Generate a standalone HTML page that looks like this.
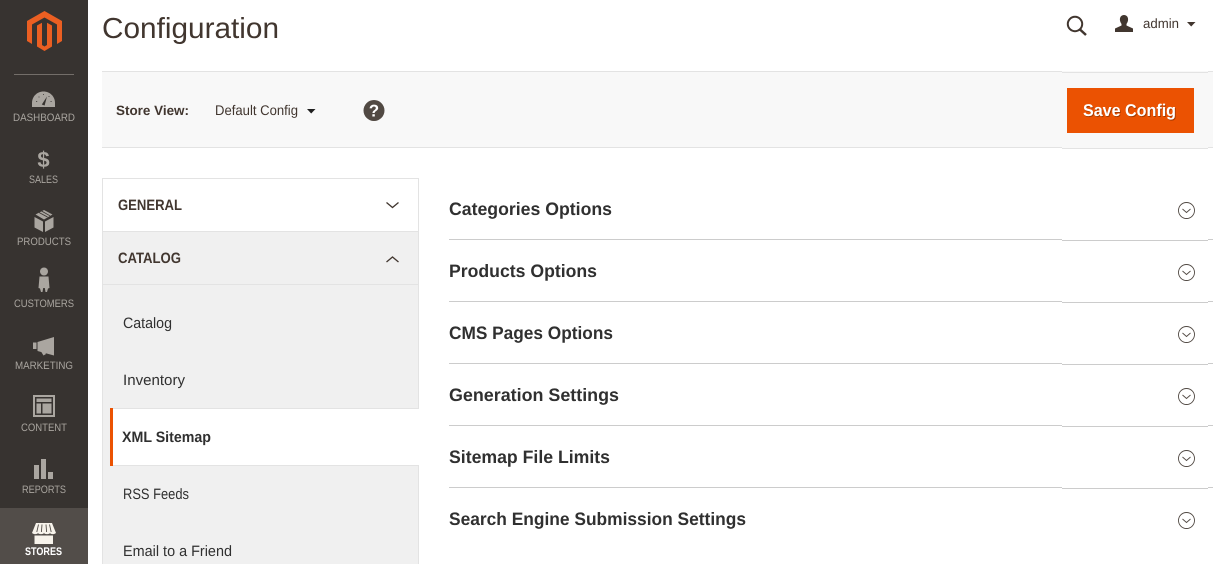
<!DOCTYPE html>
<html lang="en">
<head>
<meta charset="utf-8">
<title>Configuration</title>
<style>
html,body{margin:0;padding:0;width:1213px;height:564px;overflow:hidden;background:#fff}
svg{display:block}
text{font-family:"Liberation Sans",sans-serif;text-rendering:geometricPrecision}
.nav{font-size:10.8px;fill:#aaa6a0}
.sec{font-size:18px;font-weight:700;fill:#303030}
.tab{font-size:15px;fill:#303030}
.grp{font-size:15px;font-weight:700;fill:#41362f}
.ic{fill:#aaa6a0}
</style>
</head>
<body>
<svg width="1213" height="564" viewBox="0 0 1213 564" xmlns="http://www.w3.org/2000/svg">
<!-- sidebar -->
<rect x="0" y="0" width="88" height="564" fill="#373330"/>
<rect x="0" y="508" width="88" height="56" fill="#524d49"/>
<path fill="#eb5f22" d="M44.5 11 62 21V41L57 44V24.500L44.500 17.500 32 24.500V44L27 41V21Z"/>
<path fill="#eb5f22" d="M37 25.500 42 22.800V45L44.500 46.500 47 45V22.800L52 25.500V46.500L44.500 51 37 46.500Z"/>
<rect x="14" y="74" width="60" height="1" fill="#736e69"/>

<!-- dashboard -->
<path class="ic" d="M32 107V103C32 96.500 37 91.500 43.500 91.500S55 96.500 55 103V107Z"/>
<path d="M41.800 104.500 47 96.500 44.600 105.500Z" fill="#373330"/>
<path d="M36 101.500h1.200M38.500 97h1M43 94.500h1M48.500 96.500h1M50.500 101.500h1.200" stroke="#373330" stroke-width="0.800"/>
<text class="nav" x="13" y="121" textLength="62" lengthAdjust="spacingAndGlyphs">DASHBOARD</text>

<!-- sales -->
<text x="43.500" y="167" text-anchor="middle" style="font-size:22px;font-weight:700;fill:#aaa6a0">$</text>
<text class="nav" x="29" y="183" textLength="29" lengthAdjust="spacingAndGlyphs">SALES</text>

<!-- products -->
<path class="ic" d="M34.500 217 43 221.500V232L34.500 227.500ZM45 221.500 53.500 217V227.500L45 232ZM35.500 214.500 44 210 52.500 214.500 44 219.500Z"/>
<path d="M39 212.500 47.500 217M41.500 211 50 215.800" stroke="#373330" stroke-width="0.800" fill="none"/>
<text class="nav" x="17" y="245" textLength="54" lengthAdjust="spacingAndGlyphs">PRODUCTS</text>

<!-- customers -->
<circle class="ic" cx="44" cy="271.500" r="4"/>
<path class="ic" d="M39.500 276.500H48.500L49.500 288 48 288.500 47 292 45.500 292 44.800 288H43.200L42.500 292 41 292 40 288.500 38.500 288Z"/>
<text class="nav" x="14" y="307" textLength="60" lengthAdjust="spacingAndGlyphs">CUSTOMERS</text>

<!-- marketing -->
<path class="ic" d="M33 342.500H36.500V349H33ZM37.500 342 54 337V355.500L37.500 351H44L46 354 43.500 355.500 41 351.500H39.500L37.500 351Z"/>
<text class="nav" x="15" y="369" textLength="58" lengthAdjust="spacingAndGlyphs">MARKETING</text>

<!-- content -->
<path class="ic" fill-rule="evenodd" d="M33 395H55V417H33ZM35 397V415H53V397Z"/>
<path class="ic" d="M36.500 398.500H51.500V402H36.500ZM36.500 403.500H41V413.500H36.500ZM42.500 403.500H51.500V413.500H42.500Z"/>
<text class="nav" x="21" y="431" textLength="46" lengthAdjust="spacingAndGlyphs">CONTENT</text>

<!-- reports -->
<path class="ic" d="M34 465H39V479H34ZM41 459H46V479H41ZM48 472H53V479H48Z"/>
<text class="nav" x="22" y="493" textLength="44" lengthAdjust="spacingAndGlyphs">REPORTS</text>

<!-- stores -->
<path fill="#f7f3eb" d="M36 523H52L56 533C54 534.500 52 534.500 50 533.200 48 534.500 46 534.500 44 533.200 42 534.500 40 534.500 38 533.200 36 534.500 34 534.500 32 533Z"/>
<path d="M38.500 524.500 36.800 532M42 524.500 41.400 532M46 524.500 46.600 532M49.500 524.500 51.200 532" stroke="#524d49" stroke-width="0.900"/>
<path fill="#f7f3eb" d="M34.500 535.500H53V544H34.500Z"/>
<text x="25" y="555" textLength="37" lengthAdjust="spacingAndGlyphs" style="font-size:11px;font-weight:700;fill:#fff">STORES</text>

<!-- header -->
<text x="102" y="38" textLength="177" lengthAdjust="spacingAndGlyphs" style="font-size:29px;fill:#41362f">Configuration</text>
<circle cx="1075" cy="24" r="7.200" fill="none" stroke="#41362f" stroke-width="2"/>
<path d="M1080 29.500 1086 35" stroke="#41362f" stroke-width="2.500" fill="none"/>
<path fill="#41362f" d="M1124 15C1127 15 1128.500 17.500 1128 20.500 1127.800 22 1127 23 1126.500 24V25.500L1133 28.500V32H1115V28.500L1121.500 25.500V24C1121 23 1120.200 22 1120 20.500 1119.500 17.500 1121 15 1124 15Z"/>
<text x="1143" y="28" textLength="36" lengthAdjust="spacingAndGlyphs" style="font-size:13.500px;fill:#41362f">admin</text>
<path d="M1187 22H1195.500L1191.200 26.500Z" fill="#41362f"/>

<!-- store switcher bar -->
<rect x="102" y="71" width="1111" height="77" fill="#f8f8f8"/>
<rect x="102" y="71" width="960" height="1" fill="#e3e3e3"/>
<rect x="1062" y="72" width="146" height="1" fill="#e3e3e3"/>
<rect x="1208" y="71" width="5" height="1" fill="#e3e3e3"/>
<rect x="102" y="147" width="960" height="1" fill="#e3e3e3"/>
<rect x="1062" y="148" width="146" height="1" fill="#e3e3e3"/>
<rect x="1208" y="147" width="5" height="1" fill="#e3e3e3"/>
<text x="116" y="115" textLength="73" lengthAdjust="spacingAndGlyphs" style="font-size:13.500px;font-weight:700;fill:#41362f">Store View:</text>
<text x="215" y="115" textLength="83" lengthAdjust="spacingAndGlyphs" style="font-size:14px;fill:#41362f">Default Config</text>
<path d="M307 109H315.500L311.200 113.500Z" fill="#1f1f1f"/>
<circle cx="374" cy="110.500" r="10.500" fill="#514943"/>
<text x="374" y="116.500" text-anchor="middle" style="font-size:17px;font-weight:700;fill:#fff">?</text>

<rect x="1067" y="88" width="127" height="45" fill="#eb5202"/>
<text x="1083.800" y="116.800" textLength="93" lengthAdjust="spacingAndGlyphs" style="font-size:17px;font-weight:700;fill:#a33a02">Save Config</text>
<text x="1083" y="116" textLength="93" lengthAdjust="spacingAndGlyphs" style="font-size:17px;font-weight:700;fill:#fff">Save Config</text>

<!-- left tabs -->
<rect x="102.500" y="178.500" width="316" height="400" fill="#fff" stroke="#e3e3e3"/>
<rect x="103" y="232" width="315" height="340" fill="#f0f0f0"/>
<rect x="103" y="231" width="315" height="1" fill="#e3e3e3"/>
<rect x="103" y="284" width="315" height="1" fill="#e3e3e3"/>
<text class="grp" x="118" y="210" textLength="64" lengthAdjust="spacingAndGlyphs">GENERAL</text>
<path d="M386.500 202.500 392.500 207.500 398.500 202.500" fill="none" stroke="#41362f" stroke-width="1.300"/>
<text class="grp" x="118" y="263" textLength="63" lengthAdjust="spacingAndGlyphs">CATALOG</text>
<path d="M386.500 262 392.500 257 398.500 262" fill="none" stroke="#41362f" stroke-width="1.300"/>
<text class="tab" x="123" y="328" textLength="49" lengthAdjust="spacingAndGlyphs">Catalog</text>
<text class="tab" x="123" y="385" textLength="62" lengthAdjust="spacingAndGlyphs">Inventory</text>
<rect x="110" y="408" width="309" height="58" fill="#fff"/>
<rect x="113" y="408" width="306" height="1" fill="#e3e3e3"/>
<rect x="113" y="465" width="306" height="1" fill="#e3e3e3"/>
<rect x="110" y="408" width="3" height="58" fill="#eb5202"/>
<text x="122" y="442" textLength="89" lengthAdjust="spacingAndGlyphs" style="font-size:15px;font-weight:700;fill:#303030">XML Sitemap</text>
<text class="tab" x="123" y="499" textLength="66" lengthAdjust="spacingAndGlyphs">RSS Feeds</text>
<text class="tab" x="123" y="556" textLength="109" lengthAdjust="spacingAndGlyphs">Email to a Friend</text>

<!-- sections -->
<text class="sec" x="449" y="215" textLength="163" lengthAdjust="spacingAndGlyphs">Categories Options</text>
<text class="sec" x="449" y="277" textLength="148" lengthAdjust="spacingAndGlyphs">Products Options</text>
<text class="sec" x="449" y="339" textLength="164" lengthAdjust="spacingAndGlyphs">CMS Pages Options</text>
<text class="sec" x="449" y="401" textLength="170" lengthAdjust="spacingAndGlyphs">Generation Settings</text>
<text class="sec" x="449" y="463" textLength="161" lengthAdjust="spacingAndGlyphs">Sitemap File Limits</text>
<text class="sec" x="449" y="525" textLength="297" lengthAdjust="spacingAndGlyphs">Search Engine Submission Settings</text>

<g fill="#cccccc">
<rect x="449" y="239" width="613" height="1"/><rect x="1062" y="240" width="146" height="1"/><rect x="1208" y="239" width="5" height="1"/>
<rect x="449" y="301" width="613" height="1"/><rect x="1062" y="302" width="146" height="1"/><rect x="1208" y="301" width="5" height="1"/>
<rect x="449" y="363" width="613" height="1"/><rect x="1062" y="364" width="146" height="1"/><rect x="1208" y="363" width="5" height="1"/>
<rect x="449" y="425" width="613" height="1"/><rect x="1062" y="426" width="146" height="1"/><rect x="1208" y="425" width="5" height="1"/>
<rect x="449" y="487" width="613" height="1"/><rect x="1062" y="488" width="146" height="1"/><rect x="1208" y="487" width="5" height="1"/>
</g>

<g fill="none" stroke="#514943" stroke-width="0.900">
<circle cx="1186.500" cy="210.500" r="8"/><path d="M1182.500 209 1186.500 212.500 1190.500 209"/>
<circle cx="1186.500" cy="272.500" r="8"/><path d="M1182.500 271 1186.500 274.500 1190.500 271"/>
<circle cx="1186.500" cy="334.500" r="8"/><path d="M1182.500 333 1186.500 336.500 1190.500 333"/>
<circle cx="1186.500" cy="396.500" r="8"/><path d="M1182.500 395 1186.500 398.500 1190.500 395"/>
<circle cx="1186.500" cy="458.500" r="8"/><path d="M1182.500 457 1186.500 460.500 1190.500 457"/>
<circle cx="1186.500" cy="520.500" r="8"/><path d="M1182.500 519 1186.500 522.500 1190.500 519"/>
</g>
</svg>
</body>
</html>
